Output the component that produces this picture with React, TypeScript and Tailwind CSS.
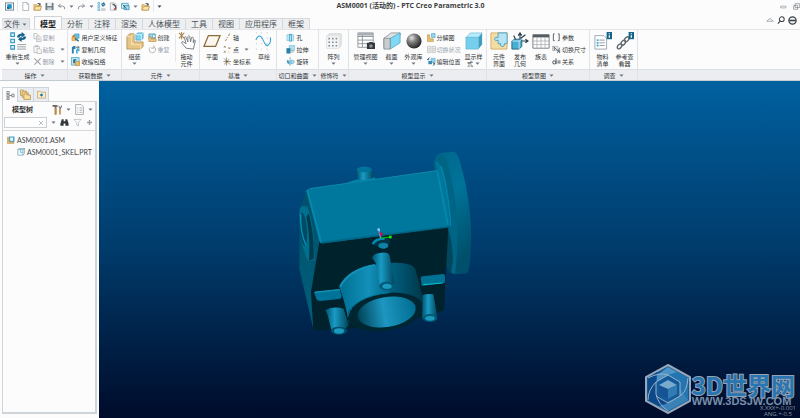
import React from 'react';

type Draw = { className?: string };

const Caret = ({ className = 'text-gray-500' }: Draw) => (
  <svg viewBox="0 0 5 3" className={`h-[3px] w-[5px] shrink-0 ${className}`}>
    <path d="M0.5 0.4h4L2.5 2.7z" fill="currentColor" />
  </svg>
);

/* Every drawing is made on a 20 x 20 grid */
const drawings: Record<string, React.ReactNode> = {
  app: (
    <>
      <rect x="1" y="2" width="18" height="16" fill="#fff" stroke="#6b7f8c" strokeWidth="2" />
      <rect x="5" y="5" width="10" height="10" fill="#1b8fc9" />
      <path d="M5 15V10l5 5z" fill="#14394f" />
    </>
  ),
  file: <path d="M4 1h9l4 4v14H4zM13 1v4h4" fill="#fff" stroke="#9aa3aa" strokeWidth="1.6" />,
  folder: (
    <>
      <path d="M2 18V6h6l2 2h7v10z" fill="#f3cf86" stroke="#b88a3c" strokeWidth="1.4" />
      <path d="M2 18l4-8h13l-3 8z" fill="#fbe3ad" stroke="#b88a3c" strokeWidth="1.4" />
      <path d="M9 4q4-4 7 0l1-2v5h-5l2-2" fill="#3b4c58" />
    </>
  ),
  save: (
    <>
      <path d="M1 2h18v16H1z" fill="#737d86" />
      <path d="M5 2h10v7H5z" fill="#eef2f5" />
      <path d="M5 12h10v6H5z" fill="#c7d0d6" />
    </>
  ),
  undo: <path d="M8 4L3 9l6 3M3 9h9q6 0 5 7" fill="none" stroke="#8c949b" strokeWidth="2.2" />,
  redo: <path d="M12 4l5 5-6 3M17 9H8Q2 9 3 16" fill="none" stroke="#8c949b" strokeWidth="2.2" />,
  regen: (
    <>
      <g fill="#d8f2fb" stroke="#2a95c0" strokeWidth="1.2">
        <path d="M2 1h4v4H2zM2 8h4v4H2zM2 15h4v4H2z" />
      </g>
      <path d="M9 6q0-4 5-4V0l4 3-4 3V4q-2 0-2 2zM19 5q0 4-5 4v2l-4-3 4-3v2q2 0 2-2z" fill="#12628d" />
      <path d="M9 14h10M9 16.500h10M9 19h10" stroke="#8e979d" strokeWidth="1" />
    </>
  ),
  close: (
    <>
      <path d="M3 2h9l4 4v12H3z" fill="#f4f6f8" stroke="#949ca3" strokeWidth="1.4" />
      <path d="M8 5q8 2 7 10" stroke="#555e66" strokeWidth="3" fill="none" />
      <path d="M11 13l5 5M16 13l-5 5" stroke="#b7443c" strokeWidth="2" />
    </>
  ),
  select: (
    <>
      <path d="M1 3h15v11H1z" fill="#d5f1fa" stroke="#3c9dc2" strokeWidth="1.800" />
      <path d="M7 8h11v9H7z" fill="#a5def0" stroke="#2c7fa5" strokeWidth="1.600" />
      <path d="M4 6l8 9" stroke="#274f68" strokeWidth="2" />
    </>
  ),
  copy: (
    <g fill="#f6f6f6" stroke="#b0b4b8" strokeWidth="1.600">
      <path d="M2 1h6l3 3v9H2z" />
      <path d="M8 7h7l3 3v9H8z" />
      <path d="M10 12h5M10 15h5" />
    </g>
  ),
  paste: (
    <g fill="#f6f6f6" stroke="#b0b4b8" strokeWidth="1.600">
      <path d="M2 3h12v14H2zM6 1h4v3H6z" />
      <path d="M9 8h6l4 4v7H9z" />
    </g>
  ),
  cross: <path d="M3 3l14 14M17 3L3 17" stroke="#9da1a5" strokeWidth="2.400" />,
  udf: (
    <>
      <path d="M8 2h10v10H8z" fill="#5fc4e8" stroke="#2a88b5" />
      <path d="M2 9h9v8H2z" fill="#f4bd55" stroke="#b98121" />
      <path d="M9 12l8 6" stroke="#1c6fa3" strokeWidth="3" />
      <circle cx="6" cy="7" r="3" fill="#dd7f39" />
    </>
  ),
  copyGeom: (
    <>
      <path d="M2 19V5l4-3h4v7H6v10z" fill="#2b7fae" />
      <path d="M11 19v-8l3-3h5v6h-4v5z" fill="#4fb0d8" />
      <path d="M11 5h6M15 2l3 3-3 3" stroke="#26333c" strokeWidth="1.500" fill="none" />
    </>
  ),
  shrink: (
    <>
      <path d="M1 1h17v17H1z" fill="#bfe8f6" stroke="#2f93be" strokeWidth="1.500" />
      <path d="M5 5h7v3H9v6H5z" fill="#1c6c9a" />
      <path d="M10 10h9v9h-9z" fill="#f0bc57" stroke="#a9772a" />
    </>
  ),
  assemble: (
    <>
      <path d="M1 5l3-3h5v9h10v5l-3 3H1z" fill="#e7c583" stroke="#a98745" strokeWidth=".8" />
      <path d="M1 5h5v9h10v5M6 5l3-3M6 14l3-3" fill="none" stroke="#fbecc6" strokeWidth=".8" />
      <path d="M11 3l2-2h6v6l-2 2h-6z" fill="#7fd3ef" stroke="#3f9fc4" strokeWidth=".8" />
      <path d="M11 3h6v6M17 3l2-2" fill="none" stroke="#e5f8fe" strokeWidth=".8" />
    </>
  ),
  create: (
    <>
      <path d="M2 2h14v11H2z" fill="#98d9ef" stroke="#398fb4" strokeWidth="1.500" />
      <path d="M2 8h5v5h11v6H2z" fill="#ecc67c" stroke="#a7803b" strokeWidth="1.200" />
      <path d="M10 4h6v6h-6z" fill="#fff" stroke="#3b6f88" />
    </>
  ),
  repeat: <path d="M13 4a7 7 0 1 1-8 1M13 1v6H7" fill="none" stroke="#a9adb1" strokeWidth="2" />,
  hand: (
    <>
      <path d="M1 1l6 6M7 1L1 7M4 0v8" stroke="#a98650" strokeWidth="1.200" />
      <path d="M9 18L4 12q0-2 2-1l3 2-2-7q1-2 2 0l2 5V5q1-2 2 0l1 6 1-5q2-1 2 1v5l1-3q2 0 1 2l-2 8z" fill="#fff" stroke="#6d7479" strokeWidth="1" />
    </>
  ),
  plane: <path d="M6 4h13l-5 12H1z" fill="#fbf7ee" stroke="#8d6b3a" strokeWidth="1.400" />,
  axis: <path d="M5 18l3-5M9 11l1-2M12 7l3-6" stroke="#87663a" strokeWidth="1.700" />,
  point: (
    <g stroke="#87663a" strokeWidth="1.500">
      <path d="M2 2l4 4M6 2L2 6M12 5l4 4M16 5l-4 4M2 13l4 4M6 13l-4 4M12 15l2 2" />
    </g>
  ),
  csys: (
    <>
      <path d="M8 1v18M1 10h17M2 3l14 14M2 17L14 5" stroke="#594b38" strokeWidth="1.300" />
      <circle cx="8" cy="10" r="2" fill="#87663a" />
    </>
  ),
  sketch: (
    <>
      <path d="M1 1h18M1 7h18M1 13h18M1 19h18" stroke="#aab1b6" strokeWidth="1" strokeDasharray="1 5" />
      <path d="M1 9q4-9 8 0t6 5q3-2 2-8" fill="none" stroke="#35a3d3" strokeWidth="1.200" />
    </>
  ),
  hole: (
    <>
      <path d="M2 4h15v13H2z" fill="#bfe9f6" stroke="#56b2d2" />
      <path d="M7 2h6v17H7z" fill="#4aa4c8" />
      <path d="M10 5v12" stroke="#fff" strokeWidth="1.500" />
    </>
  ),
  extrude: (
    <>
      <path d="M7 1h12v11H7z" fill="#a9e1f3" stroke="#56a8c6" />
      <path d="M1 7h9v12H1z" fill="#2f7fa3" />
      <path d="M10 12h6v4h-6z" fill="#ddeff6" stroke="#6a8190" />
    </>
  ),
  revolve: (
    <>
      <path d="M9 1v18" stroke="#34708f" strokeWidth="1.500" strokeDasharray="4 1" />
      <path d="M2 6l6 3v8l-6-4z" fill="#4aa4c8" />
      <path d="M11 7q8-1 7 5-3 5-7 3z" fill="#a4def2" stroke="#3d92b7" />
    </>
  ),
  pattern: (
    <>
      <path d="M1 4l3-3h15v14l-3 4H1z" fill="#e4e6e8" stroke="#c5c8cb" strokeWidth=".8" />
      <path d="M1 4h15v15H1z" fill="#f3f4f5" />
      <g fill="#888e93">
        <path d="M3 6h2v2H3zM7.500 6h2v2h-2zM12 6h2v2h-2zM3 10.500h2v2H3zM7.500 10.500h2v2h-2zM12 10.500h2v2h-2zM3 15h2v2H3zM7.500 15h2v2h-2zM12 15h2v2h-2z" />
      </g>
    </>
  ),
  views: (
    <>
      <path d="M1 1h17v16H1zM1 5h17M1 9h17M1 13h17M6 1v16" fill="#fff" stroke="#8b9399" strokeWidth="1" />
      <path d="M1 1h17v3H1z" fill="#a9afb4" />
      <path d="M11 12h2l1-1h3l1 1h2v7h-9z" fill="#33393e" />
      <circle cx="15.500" cy="15.500" r="2" fill="#8b9399" />
    </>
  ),
  section: (
    <>
      <path d="M1 17V7l8-6h10v3z" fill="#dfe2e4" stroke="#7a8187" strokeWidth=".8" />
      <path d="M8 7l11-6v11L8 19z" fill="#7fd8f5" stroke="#44a0c3" strokeWidth=".8" />
      <path d="M1 7h7v12H1z" fill="#c9cdd0" stroke="#7a8187" strokeWidth=".8" />
    </>
  ),
  explode: (
    <>
      <path d="M1 4h5v9h8v6H1z" fill="#e9bf6b" stroke="#a47a35" />
      <path d="M10 1h8v9h-8z" fill="#8cd6ee" stroke="#368bb0" />
    </>
  ),
  toggle: (
    <g fill="#efefef" stroke="#b4b7ba" strokeWidth="1.500">
      <path d="M1 3h8v14H1zM12 3h7v14h-7zM3 8h4M3 12h4M14 8h4M14 12h4" />
    </g>
  ),
  editPos: (
    <>
      <path d="M9 3h9v9H9z" fill="#8fd7ee" stroke="#378db3" />
      <path d="M3 9h8v7H3z" fill="#3589b5" />
      <path d="M6 1L1 6h4M13 19l5-4-5-2" stroke="#1c577b" strokeWidth="2" fill="none" />
    </>
  ),
  cube: (
    <>
      <path d="M1 6l5-5h13l-4 5z" fill="#b4ecfb" stroke="#57aecb" strokeWidth=".6" />
      <path d="M15 6l4-5v13l-4 5z" fill="#3d9dbf" />
      <path d="M1 6h14v13H1z" fill="#75cfec" stroke="#57aecb" strokeWidth=".6" />
    </>
  ),
  puzzle: (
    <>
      <path d="M1 1h18v18H1z" fill="#f4dca3" stroke="#c79d52" strokeWidth=".8" />
      <path d="M9 1h10v12h-3q0 4-3 3-3-1-1-3H9V9q-3 2-4-1 0-3 4-2z" fill="#b5e4f3" stroke="#479fbe" strokeWidth="1" />
    </>
  ),
  publish: (
    <>
      <path d="M1 10l3-2h8v8l-3 3H1z" fill="#4aaed1" stroke="#22617e" />
      <path d="M1 10h8v9M9 10l3-2" stroke="#c5edf8" fill="none" />
      <path d="M10 8V2M8 4l2-3 2 3M12 10h6M16 8l3 2-3 2M11 7l5-4M5 8L3 4" stroke="#293f4c" strokeWidth="1.300" fill="none" />
    </>
  ),
  table: (
    <>
      <path d="M1 3h18v15H1z" fill="#fff" stroke="#6f767b" />
      <path d="M1 3h18v3H1z" fill="#565d62" />
      <path d="M1 10h18M1 14h18M5.500 6v12M10 6v12M14.500 6v12" stroke="#a0a6aa" strokeWidth=".8" />
    </>
  ),
  brackets: <path d="M6 2H3v15h3M13 2h3v15h-3" fill="none" stroke="#4f565b" strokeWidth="2" />,
  dims: (
    <>
      <path d="M1 3h12v9H1z" fill="#e8e8e8" stroke="#83898e" />
      <path d="M3 3l14 14M5 12V5M12 18l5-12M17 10v8" stroke="#565d62" strokeWidth="1.800" />
    </>
  ),
  relation: (
    <>
      <circle cx="5" cy="12" r="3.500" fill="none" stroke="#3f464b" strokeWidth="2" />
      <path d="M9 3v13M12 9h7M12 13h7" stroke="#3f464b" strokeWidth="2" />
    </>
  ),
  bom: (
    <>
      <path d="M1 4h10l3 3v12H1z" fill="#fff" stroke="#9aa2a8" />
      <path d="M6 9h6M6 12h6M6 15h6" stroke="#8b9399" />
      <path d="M3 8h2v2H3zM3 11h2v2H3zM3 14h2v2H3z" fill="#41a9d0" />
      <path d="M14 0h6v8h-6z" fill="#136487" />
      <path d="M17 1.500v1M17 3.500v3" stroke="#fff" strokeWidth="1.400" />
    </>
  ),
  chain: (
    <>
      <g fill="none" stroke="#5d646a" strokeWidth="1.500">
        <ellipse cx="4" cy="16" rx="3" ry="2" transform="rotate(-50 4 16)" />
        <ellipse cx="8" cy="12" rx="3" ry="2" transform="rotate(-50 8 12)" />
        <ellipse cx="12" cy="8" rx="3" ry="2" transform="rotate(-50 12 8)" />
      </g>
      <path d="M14 0h6v8h-6z" fill="#136487" />
      <path d="M17 1.500v1M17 3.500v3" stroke="#fff" strokeWidth="1.400" />
    </>
  ),
  tree: <path d="M2 1h5v5H2zM2 8h5v5H2zM2 15h5v4H2zM7 10h6M13 7h5v6h-5z" fill="#fff" stroke="#555d63" strokeWidth="1.500" />,
  folders: (
    <g fill="#f7dda0" stroke="#b58b40" strokeWidth="1.300">
      <path d="M1 2h5l1 2h5v8H1z" />
      <path d="M4 5h5l1 2h5v8H4z" />
      <path d="M7 9h5l1 2h6v8H7z" />
    </g>
  ),
  favorites: (
    <>
      <path d="M1 3h7l2 2h9v13H1z" fill="#fbeecb" stroke="#b58b40" strokeWidth="1.300" />
      <path d="M10 7l4 4-4 4-4-4z" fill="#187bb0" />
    </>
  ),
  hammer: (
    <>
      <path d="M1 2h8l2 3H8v14H5V5H1z" fill="#6b6155" />
      <path d="M5 7h3v12H5zM13 9h3v10h-3z" fill="#c78a3c" />
      <path d="M12 1v4l2 4h2l2-4V1l-2 4h-2z" fill="#777e84" />
    </>
  ),
  list: <path d="M3 1h10l4 4v14H3zM6 7h2M10 7h5M6 11h2M10 11h5M6 15h2M10 15h5" fill="#fff" stroke="#8f979d" strokeWidth="1.400" />,
  binoculars: (
    <path d="M4 3h4v4h4V3h4l3 9v5h-7v-5H8v5H1v-5z" fill="#30373c" />
  ),
  funnel: <path d="M2 3h16l-6 7v8l-4-3v-5z" fill="#fff" stroke="#adb2b6" strokeWidth="1.600" />,
  plus: <path d="M10 3v14M3 10h14" stroke="#9a9fa3" strokeWidth="4" />,
  asm: (
    <>
      <path d="M1 3h6v10h10v6H1z" fill="#e4b560" stroke="#a67a33" />
      <path d="M6 2h12v12H6z" fill="#4cb4dc" stroke="#277ca2" />
      <path d="M8 4h7v8H8z" fill="#e4f7fd" />
    </>
  ),
  part: (
    <>
      <path d="M2 4h13v14H2zM2 4l3-3h14v13l-4 4M15 4l4-3" fill="#eefafd" stroke="#5e8ea3" strokeWidth="1.500" />
      <path d="M9 4v7h6" fill="none" stroke="#3fa0c5" strokeWidth="1.500" />
    </>
  ),
  minimize: <path d="M2 9h15v5H2z" fill="#fff" stroke="#91979b" strokeWidth="2" />,
  restore: <path d="M6 2h13v11H6zM2 7h11v11H2z" fill="#fff" stroke="#7d8488" strokeWidth="2" />,
  collapse: <path d="M2 13l8-7 8 7z" fill="#fff" stroke="#92989c" strokeWidth="2" />,
  search: (
    <>
      <circle cx="12" cy="8" r="6" fill="none" stroke="#3d4449" strokeWidth="2.600" />
      <path d="M8 13l-6 6" stroke="#3d4449" strokeWidth="3" />
    </>
  ),
  help: (
    <>
      <circle cx="10" cy="10" r="8" fill="#f4f5f5" stroke="#3b4247" strokeWidth="3" />
      <path d="M3 10h14" stroke="#3b4247" strokeWidth="3.500" />
    </>
  ),
  sphere: (
    <>
      <radialGradient id="ball" cx=".35" cy=".3" r=".75">
        <stop offset="0" stopColor="#e2e2e2" />
        <stop offset=".4" stopColor="#7d7d7d" />
        <stop offset="1" stopColor="#1d1d1d" />
      </radialGradient>
      <circle cx="10" cy="10" r="9.500" fill="url(#ball)" />
    </>
  ),
};

const Icon = ({ name, className = 'h-[9px] w-[9px]' }: { name: string; className?: string }) => (
  <svg viewBox="0 0 20 20" className={`shrink-0 ${className}`} aria-hidden="true">
    {drawings[name]}
  </svg>
);

type BigProps = { icon: string; lines: string[]; caret?: boolean; inlineCaret?: boolean; className?: string };

const BigButton = ({ icon, lines, caret, inlineCaret, className = 'w-[22px]' }: BigProps) => (
  <button className={`flex shrink-0 flex-col items-center pt-px ${className}`}>
    <Icon name={icon} className={icon === 'sphere' || icon === 'pattern' ? 'h-4 w-4 my-[2px]' : 'h-[18px] w-[18px] my-px'} />
    <span className="mt-[2px] flex flex-col items-center leading-[7px]">
      {lines.map((line, i) => (
        <span key={line} className="flex items-center gap-[2px] whitespace-nowrap">
          {line}
          {inlineCaret && i === lines.length - 1 && <Caret />}
        </span>
      ))}
    </span>
    {caret && <Caret className="mt-[2px] text-gray-500" />}
  </button>
);

type SmallItem = { icon: string; text: string; caret?: boolean; off?: boolean };

const SmallButtons = ({ items, className = '' }: { items: SmallItem[]; className?: string }) => (
  <div className={`flex shrink-0 flex-col pt-px ${className}`}>
    {items.map((item) => (
      <button
        key={item.text}
        className={`flex h-3 items-center gap-px whitespace-nowrap ${item.off ? 'text-gray-400' : ''}`}
      >
        <Icon name={item.icon} />
        {item.text}
        {item.caret && <Caret className="ml-1 text-gray-500" />}
      </button>
    ))}
  </div>
);

type GroupProps = { label: string; className: string; children: React.ReactNode };

const Group = ({ label, className, children }: GroupProps) => (
  <section className={`flex shrink-0 flex-col border-r border-[#e0e2e5] ${className}`}>
    <div className="flex h-[39px] justify-center">{children}</div>
    <button className="flex h-[11px] items-center justify-center gap-[3px] border-t border-[#dcdfe2] bg-[#ebedf0] whitespace-nowrap">
      {label}
      <Caret />
    </button>
  </section>
);

const QuickBar = () => (
  <div className="flex flex-1 items-center gap-[3px] pl-[5px]">
    <button aria-label="Window"><Icon name="app" /></button>
    <span className="h-3 w-px bg-gray-200" />
    <button aria-label="New"><Icon name="file" /></button>
    <button aria-label="Open"><Icon name="folder" /></button>
    <button aria-label="Save"><Icon name="save" /></button>
    <button aria-label="Undo" className="flex items-center gap-[3px]"><Icon name="undo" /><Caret /></button>
    <button aria-label="Redo" className="flex items-center gap-[3px]"><Icon name="redo" /><Caret /></button>
    <button aria-label="Regenerate"><Icon name="regen" /></button>
    <button aria-label="Close"><Icon name="close" /></button>
    <button aria-label="Select" className="flex items-center gap-[3px]"><Icon name="select" /><Caret /></button>
    <button aria-label="Working folder"><Icon name="folder" /></button>
    <span className="h-3 w-px bg-gray-200" />
    <button aria-label="Customize"><Caret className="text-gray-700" /></button>
  </div>
);

const tabs = ['分析', '注释', '渲染', '人体模型', '工具', '视图', '应用程序', '框架'];

const TabRow = () => (
  <div className="flex h-[14px] items-end justify-between pl-[2px]">
    <nav className="flex items-end text-[8px] leading-[10px] text-[#4b5055]">
      <button className="flex h-[11px] items-center gap-[2px] border-t border-r border-[#d5d8dc] bg-[#e3e6ea] px-[2px]">
        文件 <Caret />
      </button>
      <button className="ml-1 h-[13px] border border-b-0 border-[#d0d4d8] bg-[#fcfcfc] px-[5px] pt-px font-bold text-[#222]">模型</button>
      {tabs.map((tab) => (
        <button key={tab} className="h-[11px] border-t border-r border-[#d5d8dc] bg-[#edeff1] px-[5px] whitespace-nowrap">
          {tab}
        </button>
      ))}
    </nav>
    <div className="flex h-[10px] items-center gap-[3px] self-start pr-[3px]">
      <button aria-label="Collapse ribbon"><Icon name="collapse" className="h-2 w-2" /></button>
      <button aria-label="Search"><Icon name="search" className="h-2 w-2" /></button>
      <button aria-label="Help"><Icon name="help" /></button>
    </div>
  </div>
);

const Ribbon = () => (
  <div className="flex border-t border-b border-t-[#e3e5e8] border-b-[#c3cad0] pl-[2px] text-[6px] leading-[7px] text-[#303437]">
    <Group label="操作" className="w-[66px]">
      <BigButton icon="regen" lines={['重新生成']} caret className="w-[30px]" />
      <SmallButtons
        className="w-[34px]"
        items={[
          { icon: 'copy', text: '复制', off: true },
          { icon: 'paste', text: '粘贴', caret: true, off: true },
          { icon: 'cross', text: '删除', caret: true, off: true },
        ]}
      />
    </Group>
    <Group label="获取数据" className="w-[54px]">
      <SmallButtons
        items={[
          { icon: 'udf', text: '用户定义特征' },
          { icon: 'copyGeom', text: '复制几何' },
          { icon: 'shrink', text: '收缩包络' },
        ]}
      />
    </Group>
    <Group label="元件" className="w-[78px]">
      <BigButton icon="assemble" lines={['组装']} caret />
      <SmallButtons
        className="ml-[2px] w-[27px]"
        items={[
          { icon: 'create', text: '创建' },
          { icon: 'repeat', text: '重复', off: true },
        ]}
      />
      <span className="mt-1 h-7 w-px bg-gray-200" />
      <BigButton icon="hand" lines={['拖动', '元件']} />
    </Group>
    <Group label="基准" className="w-[77px]">
      <BigButton icon="plane" lines={['平面']} />
      <SmallButtons
        className="w-[30px]"
        items={[
          { icon: 'axis', text: '轴' },
          { icon: 'point', text: '点', caret: true },
          { icon: 'csys', text: '坐标系' },
        ]}
      />
      <BigButton icon="sketch" lines={['草绘']} />
    </Group>
    <Group label="切口和曲面" className="w-[42px]">
      <SmallButtons
        items={[
          { icon: 'hole', text: '孔' },
          { icon: 'extrude', text: '拉伸' },
          { icon: 'revolve', text: '旋转' },
        ]}
      />
    </Group>
    <Group label="修饰符" className="w-[30px]">
      <BigButton icon="pattern" lines={['阵列']} caret />
    </Group>
    <Group label="模型显示" className="w-[138px]">
      <BigButton icon="views" lines={['管理视图']} caret className="w-[30px]" />
      <BigButton icon="section" lines={['截面']} caret />
      <BigButton icon="sphere" lines={['外观库']} caret />
      <SmallButtons
        className="ml-[2px] w-[36px]"
        items={[
          { icon: 'explode', text: '分解图' },
          { icon: 'toggle', text: '切换状况', off: true },
          { icon: 'editPos', text: '编辑位置' },
        ]}
      />
      <BigButton icon="cube" lines={['显示样', '式']} inlineCaret />
    </Group>
    <Group label="模型意图" className="w-[103px]">
      <BigButton icon="puzzle" lines={['元件', '界面']} />
      <BigButton icon="publish" lines={['发布', '几何']} className="w-5" />
      <BigButton icon="table" lines={['族表']} />
      <SmallButtons
        className="w-[36px]"
        items={[
          { icon: 'brackets', text: '参数' },
          { icon: 'dims', text: '切换尺寸' },
          { icon: 'relation', text: '关系' },
        ]}
      />
    </Group>
    <Group label="调查" className="w-[48px]">
      <BigButton icon="bom" lines={['物料', '清单']} />
      <BigButton icon="chain" lines={['参考查', '看器']} />
    </Group>
    <div className="flex flex-1 flex-col justify-end">
      <div className="h-[11px] border-t border-[#dcdfe2] bg-[#ebedf0]" />
    </div>
  </div>
);

const ModelTree = () => (
  <aside className="flex w-[99px] shrink-0 flex-col pt-[6px] pr-[2px] pb-1 pl-[2px]">
    <div className="flex h-[14px]">
      <button aria-label="Model tree" className="z-10 -mb-px flex w-4 items-center justify-center border border-b-0 border-[#cfd4d8] bg-[#fcfcfc]"><Icon name="tree" /></button>
      <button aria-label="Folder browser" className="flex w-4 items-center justify-center border-t border-r border-[#cfd4d8] bg-[#e9ecf0]"><Icon name="folders" className="h-[11px] w-[11px]" /></button>
      <button aria-label="Favorites" className="flex w-[15px] items-center justify-center border-t border-r border-[#cfd4d8] bg-[#e9ecf0]"><Icon name="favorites" /></button>
    </div>
    <div className="flex flex-1 flex-col border border-r-2 border-b-2 border-[#cfd4d8]">
      <div className="flex h-[14px] items-center pr-[2px] pl-[9px]">
        <h2 className="flex-1 text-[7px] leading-[10px] font-bold text-[#333]">模型树</h2>
        <button aria-label="Settings" className="flex items-center gap-[3px]"><Icon name="hammer" className="h-[11px] w-[11px]" /><Caret /></button>
        <button aria-label="Show" className="ml-[3px] flex items-center gap-[3px]"><Icon name="list" className="h-[11px] w-[11px]" /><Caret /></button>
      </div>
      <div className="flex h-[13px] items-center justify-between pr-[2px] pl-px">
        <div className="flex h-[11px] w-[43px] items-center border border-[#cbd0d4] bg-white pr-[2px]">
          <input aria-label="Search tree" className="h-[9px] w-0 flex-1 text-[7px] outline-none" />
          <button aria-label="Clear" className="flex"><Icon name="cross" className="h-[6px] w-[6px]" /></button>
        </div>
        <Caret />
        <button aria-label="Find"><Icon name="binoculars" /></button>
        <button aria-label="Filter"><Icon name="funnel" /></button>
        <button aria-label="Add"><Icon name="plus" className="h-[7px] w-[7px]" /></button>
      </div>
      <ul className="mt-px border-t border-[#d5d9dc] pt-[3px] font-['Lato','Noto_Sans',sans-serif] text-[7px] leading-3 text-[#3f4449]">
        <li className="flex items-center gap-[2px] pl-1"><Icon name="asm" className="h-2 w-2" />ASM0001.ASM</li>
        <li className="flex items-center gap-[2px] pl-[14px]"><Icon name="part" className="h-2 w-2" />ASM0001_SKEL.PRT</li>
      </ul>
    </div>
  </aside>
);

const Housing = () => (
  <svg viewBox="0 0 600 600" className="absolute top-[59px] left-[181px] h-[200px] w-[200px]" aria-hidden="true">
    <defs>
      <linearGradient id="rim" x1="0" y1="0" x2=".3" y2="1">
        <stop offset="0" stopColor="#00668a" />
        <stop offset=".45" stopColor="#007399" />
        <stop offset="1" stopColor="#00506b" />
      </linearGradient>
      <linearGradient id="barrel">
        <stop offset="0" stopColor="#006e92" />
        <stop offset=".35" stopColor="#1390ba" />
        <stop offset=".62" stopColor="#006080" />
        <stop offset="1" stopColor="#003647" />
      </linearGradient>
      <linearGradient id="bore">
        <stop offset="0" stopColor="#004257" />
        <stop offset=".45" stopColor="#1d96c0" />
        <stop offset="1" stopColor="#006d91" />
      </linearGradient>
      <linearGradient id="boss">
        <stop offset="0" stopColor="#00526c" />
        <stop offset=".4" stopColor="#189bc4" />
        <stop offset="1" stopColor="#00455a" />
      </linearGradient>
      <linearGradient id="side" x2="0" y2="1">
        <stop offset="0" stopColor="#00516b" />
        <stop offset="1" stopColor="#005f7b" />
      </linearGradient>
    </defs>

    {/* right flange */}
    <path d="M462 72Q464 40 490 38l30-3q14 0 25 50c20 70 31 160 28 225q-2 75-12 90l-34 3q-24-4-29-30z" fill="url(#rim)" />
    <path d="M462 72q4-24 24-28 16 4 26 66c16 60 22 130 20 190q-2 70-7 103-20-4-25-28l6-120z" fill="#006485" />
    <path d="M466 66q10-12 24 40 16 72 18 155l-12-8-25-165z" fill="#00769b" />
    <path d="M482 78q22 60 30 180" fill="none" stroke="#0088ae" strokeWidth="4" />
    <path d="M500 265q14 10 19 95l-6 38q-14-12-15-26z" fill="#00465c" />

    {/* rear pin */}
    <path d="M198 128l36-10 46-8 8 6-60 14z" fill="#0086ad" />
    <path d="M229 92q3-12 24-12 22 0 24 10l4 24-44 8z" fill="url(#boss)" />
    <ellipse cx="253" cy="89" rx="23" ry="8" fill="#00739a" />

    {/* block: left, front and top faces */}
    <path d="M80 150l40 160-15 145 4 117-9-6-42-180 1-175z" fill="url(#side)" />
    <path d="M118 306l387-46-7 135-6 115-30 12-165 38-197 12-7-116z" fill="#00222c" />
    <path d="M80 152q2-6 10-7l384-54 32 164q0 6-10 7l-366 48q-10 1-12-6z" fill="#00779c" />
    <path d="M82 152l41 154" stroke="#0589ae" strokeWidth="6" strokeLinecap="round" />
    <path d="M126 308l376-47" stroke="#006584" strokeWidth="5" strokeLinecap="round" />
    <path d="M472 93l32 162" stroke="#0589ae" strokeWidth="5" />
    <path d="M90 146l380-54" stroke="#0f86a9" strokeWidth="3" />

    {/* left port */}
    <path d="M58 218q0-20 14-20l10 2q22 55 21 160l-18 4q-28-50-27-146z" fill="#00708f" />
    <path d="M86 220q17 58 15 136l-14 6q4-80-8-130z" fill="#00394b" />
    <ellipse cx="70" cy="268" rx="11" ry="50" fill="#004b64" transform="rotate(-5 70 268)" />
    <path d="M62 222q-2 54 16 94" stroke="#0090b6" strokeWidth="4" fill="none" />

    {/* ledges */}
    <path d="M103 460q0-5 8-6l68-6 6 20q0 8-8 9l-56 6q-10 0-12-6z" fill="#007398" />
    <path d="M103 457l76-8" stroke="#1493b8" strokeWidth="4" />
    <path d="M422 414q0-4 7-5l60-7q6 0 6 6v20l-70 10z" fill="#007093" />
    <path d="M430 434l58-5" stroke="#00c3d5" strokeWidth="3" />

    {/* barrel */}
    <path d="M178 442q22-58 120-70 96-12 108 16l25 92-45 55-180 12q-10-60-28-105z" fill="url(#barrel)" />
    <path d="M180 440q28-52 105-65" stroke="#1292b7" strokeWidth="6" fill="none" />
    <ellipse cx="316" cy="516" rx="115" ry="56" fill="#002631" transform="rotate(-9 316 516)" />
    <ellipse cx="320" cy="516" rx="88" ry="45" fill="url(#bore)" transform="rotate(-9 320 516)" />
    <path d="M203 530q14-60 125-72" stroke="#007da3" strokeWidth="3" fill="none" />

    {/* screw bosses */}
    <path d="M276 354q3-14 28-16 23-2 25 10l15 84-20 20-23-8-14-75z" fill="url(#boss)" />
    <ellipse cx="321" cy="438" rx="23" ry="13" fill="#005a75" />
    <ellipse cx="321" cy="439" rx="14" ry="8" fill="#1b99bf" />
    <path d="M136 510q25-12 55-4l15 50-25 22-26-4-12-48z" fill="url(#boss)" />
    <ellipse cx="177" cy="572" rx="24" ry="12" fill="#00506a" />
    <ellipse cx="177" cy="573" rx="15" ry="8" fill="#1b99bf" />
    <path d="M428 466q12-6 32-3l12 68-20 10-26-8z" fill="url(#boss)" />
    <ellipse cx="450" cy="534" rx="22" ry="12" fill="#005a75" />
    <ellipse cx="450" cy="535" rx="14" ry="7" fill="#1b99bf" />
    <path d="M277 314q5-18 34-20 20 0 20 12-8 16-25 18z" fill="#003648" />
    <path d="M278 312q8-16 36-16" stroke="#008fb5" strokeWidth="7" fill="none" />
    <ellipse cx="310" cy="317" rx="15" ry="9" fill="#1182a6" />

    {/* spin centre */}
    <path d="M302 294l-6-26" stroke="#6ea8e8" strokeWidth="4" />
    <circle cx="296" cy="269" r="4" fill="#9cc8f5" />
    <path d="M302 294l30-3" stroke="#00c400" strokeWidth="3" />
    <path d="M327 287h8v8h-8z" fill="#16f016" />
    <path d="M297 277l11 1-4 14z" fill="#d3083f" />
  </svg>
);

const SiteMark = () => (
  <div className="absolute right-[5px] bottom-1 flex items-center gap-px opacity-85">
    <svg viewBox="0 0 46 50" className="h-[50px] w-[46px]" aria-hidden="true">
      <path d="M23 1l22 12v24L23 49 1 37V13z" fill="#1667ac" stroke="#b4c1cf" strokeWidth="2" />
      <path d="M23 3l20 11-8 3-12-6-12 7v-6z" fill="#5aaade" />
      <path d="M43 14v22l-8 5V18l-12-7 9-3z" fill="#2a86c6" />
      <path d="M43 36L23 47l-9-5 21-10v-7z" fill="#4396d0" />
      <path d="M3 14l9-6-1 22 12 9-9 3L3 36z" fill="#0e5398" />
      <path d="M11 18L23 11l12 7M35 18v14M35 32l-12 7-12-7M11 30V18M3 14Q14 8 23 11M43 14q-1 14-8 18M3 36q0-10 8-18M23 47Q13 40 11 30" stroke="#b8cde0" strokeWidth="1" fill="none" />
      <path d="M23 16l9 5v9l-9 5-9-5v-9z" fill="#1b5fa6" />
      <path d="M23 16l9 5-9 4-9-4z" fill="#8dc6e8" />
      <path d="M23 25l9-4v9l-9 5z" fill="#398ec9" />
    </svg>
    <div className="flex flex-col font-bold text-[#2f86c6] [paint-order:stroke_fill]">
      <span className="text-[24px] leading-[24px] whitespace-nowrap [-webkit-text-stroke:2px_#aebccb]">3D世界网</span>
      <span className="font-['Liberation_Sans',sans-serif] text-[11px] leading-[8px] text-[#8fa6c0]">WWW.3DSJW.COM</span>
    </div>
  </div>
);

export default function App() {
  return (
    <div className="flex h-screen w-full flex-col overflow-hidden bg-[#fcfcfc] font-['Noto_Sans_CJK_SC',sans-serif]">
      <header className="flex h-[15px] shrink-0 items-start">
        <QuickBar />
        <h1 className="pl-4 font-['Open_Sans','Noto_Sans_CJK_SC',sans-serif] text-[7px] leading-3 font-bold whitespace-nowrap text-[#3a3d40]">
          ASM0001 (活动的) - PTC Creo Parametric 3.0
        </h1>
        <div className="flex h-3 flex-1 items-center justify-end gap-[6px]">
          <button aria-label="Minimize" className="flex"><Icon name="minimize" className="h-[7px] w-[7px]" /></button>
          <button aria-label="Restore" className="flex"><Icon name="restore" className="h-[7px] w-[7px]" /></button>
        </div>
      </header>
      <TabRow />
      <Ribbon />
      <div className="flex min-h-0 flex-1">
        <ModelTree />
        <main className="relative flex-1 overflow-hidden bg-linear-to-b from-[#0061a0] via-[#003b6b] to-[#000c2b]">
          <Housing />
          <SiteMark />
          <p className="absolute right-[4px] bottom-px text-center font-['Open_Sans',sans-serif] text-[6px] leading-[6px] text-[#8c94a0]">
            X.XXX+-0.001
            <br />
            ANG.+-0.5
          </p>
        </main>
      </div>
    </div>
  );
}
